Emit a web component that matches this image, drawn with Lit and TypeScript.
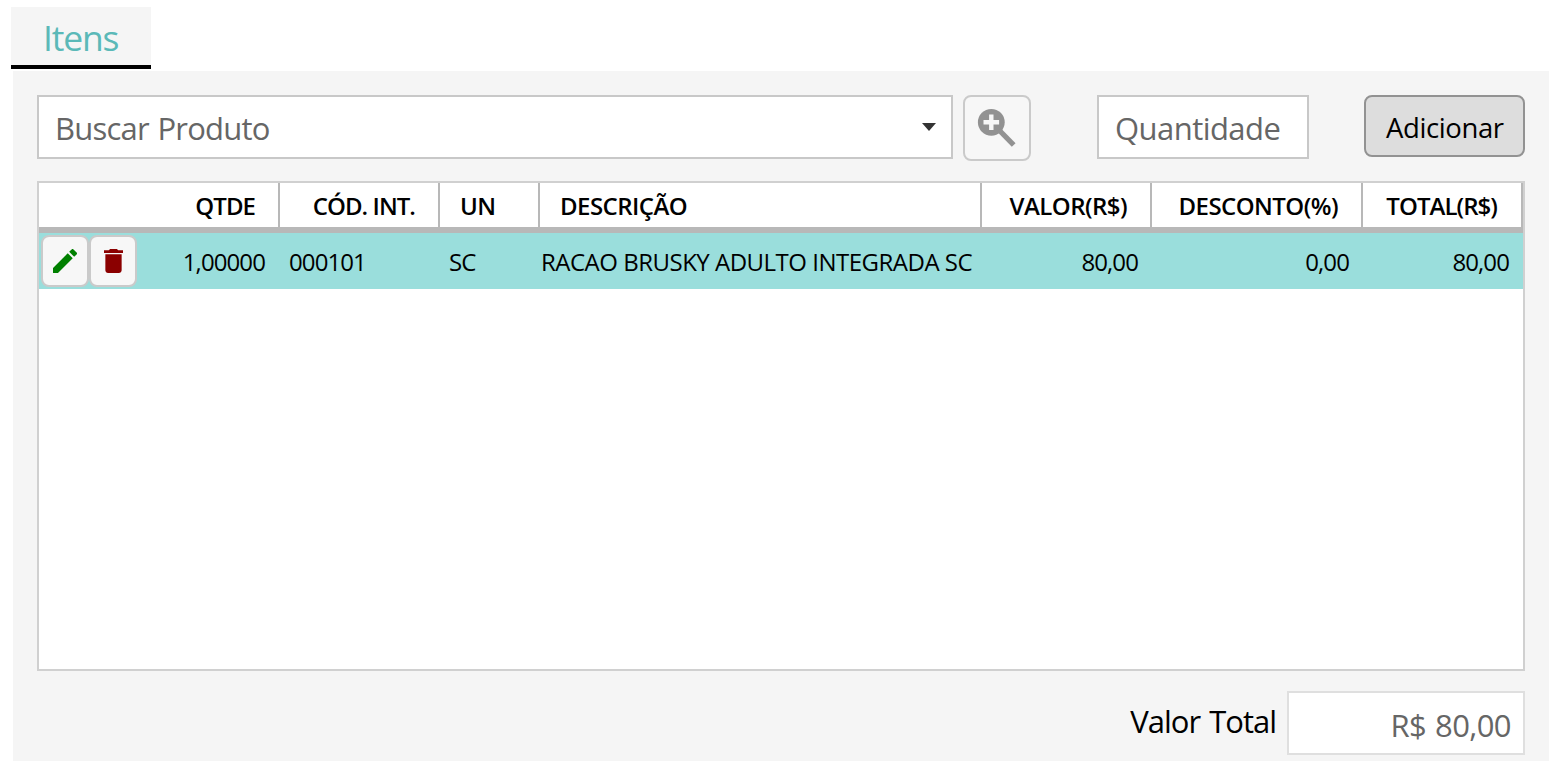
import { LitElement, html, css } from "lit";
import { customElement } from "lit/decorators.js";

@customElement("app-root")
export class AppRoot extends LitElement {
  static styles = css`
    :host {
      display: block;
      box-sizing: border-box;
      height: 769px;
      padding-top: 7px;
      background: #fff;
      color: #000;
      font-family: "Open Sans", "Noto Sans", sans-serif;
      overflow: hidden;
      white-space: nowrap;
    }
    * {
      box-sizing: border-box;
    }
    .tab {
      width: 140px;
      height: 62px;
      margin-left: 11px;
      padding-left: 32px;
      background: #f5f5f5;
      border-bottom: 4px solid #000;
      color: #5bb9b8;
      font-size: 35.5px;
      letter-spacing: -1.2px;
      line-height: 60px;
    }
    .panel {
      margin: 2px 0 0 13px;
      height: 690px;
      padding: 24px 24px 0;
      background: #f5f5f5;
    }
    .bar {
      display: flex;
      align-items: flex-start;
      height: 86px;
    }
    .field {
      display: flex;
      align-items: center;
      height: 64px;
      padding: 0 16px;
      border: 2px solid #c8c8c8;
      background: #fff;
      color: #666;
      font-size: 31px;
      line-height: 60px;
    }
    .field > span {
      padding-top: 2px;
    }
    .search {
      width: 916px;
      padding: 0 15px 0 16px;
      justify-content: space-between;
      letter-spacing: -0.8px;
      word-spacing: 1.5px;
    }
    .caret {
      width: 14px;
      height: 8px;
    }
    .zoom {
      width: 68px;
      height: 66px;
      margin-left: 10px;
      border: 2px solid #cacaca;
      border-radius: 8px;
      background: #f7f7f7;
      padding: 11px 0 0 12px;
    }
    svg {
      display: block;
    }
    .qty {
      width: 212px;
      margin-left: 66px;
      letter-spacing: -0.55px;
    }
    .add {
      width: 161px;
      height: 62px;
      margin-left: 55px;
      border: 2px solid #929292;
      border-radius: 8px;
      background: #ddd;
      font-size: 27.5px;
      letter-spacing: -0.4px;
      line-height: 62px;
      padding-left: 20px;
    }
    .table {
      height: 490px;
      border: 2px solid #d0d0d0;
      background: #fff;
      font-size: 24px;
    }
    .grid {
      display: grid;
      grid-template-columns: 241px 160px 100px 442px 170px 211px 160px;
    }
    .head {
      height: 50px;
      border-bottom: 6px solid #b8b8b8;
      font-weight: 600;
      line-height: 46px;
      letter-spacing: -0.55px;
    }
    .head > div {
      border-right: 2px solid #b8b8b8;
      padding: 0 23px 0 20px;
    }
    .head > .tight {
      letter-spacing: -0.95px;
    }
    .head > .last {
      padding-right: 24px;
    }
    .row {
      height: 56px;
      background: #9adedc;
      line-height: 58px;
      letter-spacing: -0.9px;
    }
    .row > div {
      padding: 0 14px 0 9px;
    }
    .r {
      text-align: right;
    }
    .row > .first {
      display: flex;
      padding: 2px 15px 0 2px;
    }
    .first > .r {
      flex: 1;
      line-height: 54px;
    }
    .row > .desc {
      padding: 0 0 0 1px;
      letter-spacing: -0.5px;
    }
    .btn {
      width: 48px;
      height: 52px;
      border: 2px solid #cacaca;
      border-radius: 8px;
      background: #f7f7f7;
      display: flex;
      align-items: center;
      justify-content: center;
    }
    .foot {
      display: flex;
      justify-content: flex-end;
      padding-top: 20px;
    }
    .label {
      font-size: 31px;
      letter-spacing: -1px;
      word-spacing: 2px;
      line-height: 60px;
      margin-right: 11px;
    }
    .total {
      width: 238px;
      border-color: #dfdfdf;
      padding: 0 12px;
      justify-content: flex-end;
      letter-spacing: -0.6px;
      word-spacing: 1.5px;
    }
    .total > span {
      padding-top: 4px;
    }
  `;

  render() {
    return html`
      <div class="tab">Itens</div>
      <div class="panel">
        <div class="bar">
          <div class="field search">
            <span>Buscar Produto</span>
            <svg class="caret" viewBox="0 0 14 8"><path d="M0 0H14L7 8Z" fill="#333" /></svg>
          </div>
          <div class="zoom">
            <svg width="40" height="40" viewBox="0 0 40 40">
              <circle cx="14.3" cy="14.300" r="13.400" fill="#929292" />
              <path d="M22 22L36.700 37" stroke="#929292" stroke-width="5.300" fill="none" />
              <path d="M14.300 6.500v15.500M6.500 14.300h15.600" stroke="#f7f7f7" stroke-width="4.400" fill="none" />
            </svg>
          </div>
          <div class="field qty"><span>Quantidade</span></div>
          <div class="add">Adicionar</div>
        </div>
        <div class="table">
          <div class="grid head">
            <div class="r tight">QTDE</div>
            <div class="r tight">CÓD. INT.</div>
            <div>UN</div>
            <div>DESCRIÇÃO</div>
            <div class="r">VALOR(R$)</div>
            <div class="r">DESCONTO(%)</div>
            <div class="r tight last">TOTAL(R$)</div>
          </div>
          <div class="grid row">
            <div class="first">
              <div class="btn">
                <svg width="24" height="24" viewBox="3 3 18 18">
                  <path fill="#008000" d="M3 17.25V21h3.75L17.81 9.94l-3.75-3.75L3 17.25zM20.71 7.04a1 1 0 0 0 0-1.41l-2.34-2.34a1 1 0 0 0-1.41 0l-1.83 1.83 3.75 3.75 1.83-1.83z" />
                </svg>
              </div>
              <div class="btn">
                <svg width="19" height="24" viewBox="5 3 14 18" preserveAspectRatio="none">
                  <path fill="#8b0000" d="M6 19c0 1.1.9 2 2 2h8c1.100 0 2-.9 2-2V7H6v12zM19 4h-3.500l-1-1h-5l-1 1H5v2h14V4z" />
                </svg>
              </div>
              <div class="r">1,00000</div>
            </div>
            <div>000101</div>
            <div>SC</div>
            <div class="desc">RACAO BRUSKY ADULTO INTEGRADA SC</div>
            <div class="r">80,00</div>
            <div class="r">0,00</div>
            <div class="r">80,00</div>
          </div>
        </div>
        <div class="foot">
          <div class="label">Valor Total</div>
          <div class="field total"><span>R$ 80,00</span></div>
        </div>
      </div>
    `;
  }
}
